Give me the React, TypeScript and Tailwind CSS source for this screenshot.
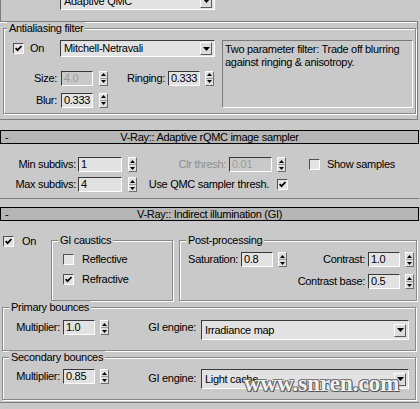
import React from "react";

interface FieldProps {
  value: string;
  w?: string;
  disabled?: boolean;
}

const Field: React.FC<FieldProps> = ({ value, w = "w-[32px]", disabled = false }) => (
  <div
    className={`${w} h-[15px] shrink-0 flex items-center pl-[2px] border border-t-[#3a3a3a] border-l-[#3a3a3a] border-b-white border-r-white ${
      disabled ? "bg-[#c9c9c9] text-[#9c9c9c]" : "bg-[#e2e2e2]"
    }`}
  >
    {value}
  </div>
);

const Spinner: React.FC = () => (
  <div className="w-[9px] h-[15px] shrink-0 flex flex-col bg-[#dedede] border border-t-white border-l-white border-b-[#6e6e6e] border-r-[#6e6e6e]">
    <div className="flex-1 flex items-center justify-center border-b border-[#9a9a9a]">
      <svg width="5" height="3" viewBox="0 0 5 3">
        <path d="M2.5 0L5 3H0z" fill="#000" />
      </svg>
    </div>
    <div className="flex-1 flex items-center justify-center">
      <svg width="5" height="3" viewBox="0 0 5 3">
        <path d="M0 0h5L2.5 3z" fill="#000" />
      </svg>
    </div>
  </div>
);

const Check: React.FC<{ checked?: boolean }> = ({ checked = false }) => (
  <div className="w-[11px] h-[11px] shrink-0 flex items-center justify-center bg-[#e4e4e4] border border-t-[#505050] border-l-[#505050] border-b-white border-r-white">
    {checked && (
      <svg width="7" height="7" viewBox="0 0 7 7">
        <polyline points="0.6,3.2 2.5,5.2 6.5,1" fill="none" stroke="#000" strokeWidth="1.7" />
      </svg>
    )}
  </div>
);

const Dropdown: React.FC<{ value: string; className?: string }> = ({ value, className = "" }) => (
  <div
    className={`shrink-0 flex items-center bg-[#e2e2e2] border border-t-[#3a3a3a] border-l-[#3a3a3a] border-b-white border-r-white pl-[3px] pr-[2px] ${className}`}
  >
    <span className="flex-1 truncate">{value}</span>
    <div className="w-[12px] h-[13px] flex items-center justify-center bg-[#dcdcdc] border border-t-white border-l-white border-b-[#5a5a5a] border-r-[#5a5a5a]">
      <svg width="7" height="4" viewBox="0 0 7 4">
        <path d="M0 0h7L3.5 4z" fill="#000" />
      </svg>
    </div>
  </div>
);

interface GroupProps {
  title: string;
  className?: string;
  titleClass?: string;
  children?: React.ReactNode;
}

const Group: React.FC<GroupProps> = ({ title, className = "", titleClass = "left-[6px]", children }) => (
  <div
    className={`relative shrink-0 border border-[#888888] shadow-[inset_1px_1px_0_#ffffff,1px_1px_0_#ffffff] ${className}`}
  >
    <span className={`absolute -top-[7px] px-[2px] bg-[#c9c9c9] leading-[13px] ${titleClass}`}>{title}</span>
    {children}
  </div>
);

const Header: React.FC<{ title: string; className?: string }> = ({ title, className = "" }) => (
  <div
    className={`relative w-[419px] h-[14px] shrink-0 flex items-center justify-center border border-black bg-[#b6b6b6] ${className}`}
  >
    <span className="absolute left-[4px] top-0 leading-[12px]">-</span>
    <span className="leading-[12px]">{title}</span>
  </div>
);

const App: React.FC = () => {
  return (
    <div className="relative w-[420px] h-[409px] overflow-hidden flex flex-col bg-[#c9c9c9] text-black text-[11px] leading-[13px] tracking-[-0.3px] font-['Liberation_Sans',Arial,sans-serif]">
      {/* tail of the sampler rollout */}
      <div className="h-[22px] w-[418px] shrink-0 border-l border-b border-[#7d7d7d] shadow-[0_1px_0_#ffffff]">
        <div className="flex items-center h-[18px] -mt-[8px]">
          <span className="w-[36px] text-right self-start -mt-[5px]">Type:</span>
          <Dropdown value="Adaptive QMC" className="ml-[23px] w-[155px] h-[18px]" />
        </div>
      </div>

      {/* Antialiasing filter */}
      <div className="h-[98px] w-[418px] shrink-0 pt-[6px] pl-[3px] border-r border-b border-[#7d7d7d]">
        <Group title="Antialiasing filter" className="w-[413px] h-[86px] flex" titleClass="left-[3px]">
          <div className="w-[218px] pt-[11px] flex flex-col">
            <div className="flex items-center h-[17px]">
              <div className="w-[56px] flex items-center">
                <div className="ml-[9px]">
                  <Check checked />
                </div>
                <span className="ml-[6px]">On</span>
              </div>
              <Dropdown value="Mitchell-Netravali" className="w-[155px] h-[17px]" />
            </div>
            <div className="flex items-center h-[16px] mt-[13px]">
              <span className="w-[53px] text-right">Size:</span>
              <div className="ml-[4px]">
                <Field value="4.0" disabled />
              </div>
              <div className="ml-[6px]">
                <Spinner />
              </div>
              <span className="w-[57px] text-right">Ringing:</span>
              <div className="ml-[3px]">
                <Field value="0.333" />
              </div>
              <div className="ml-[5px]">
                <Spinner />
              </div>
            </div>
            <div className="flex items-center h-[16px] mt-[6px]">
              <span className="w-[53px] text-right">Blur:</span>
              <div className="ml-[4px]">
                <Field value="0.333" />
              </div>
              <div className="ml-[6px]">
                <Spinner />
              </div>
            </div>
          </div>
          <div className="mt-[11px] w-[191px] h-[68px] pl-[2px] pt-[2px] border border-t-[#7a7a7a] border-l-[#7a7a7a] border-b-white border-r-white">
            Two parameter filter: Trade off blurring
            <br />
            against ringing &amp; anisotropy.
          </div>
        </Group>
      </div>

      {/* Adaptive rQMC image sampler */}
      <Header title="V-Ray:: Adaptive rQMC image sampler" className="mt-[10px]" />
      <div className="h-[55px] w-[419px] shrink-0 pt-[13px] border-b border-[#7d7d7d]">
        <div className="flex items-center h-[15px]">
          <span className="w-[76px] text-right">Min subdivs:</span>
          <div className="ml-[2px]">
            <Field value="1" w="w-[44px]" />
          </div>
          <div className="ml-[6px]">
            <Spinner />
          </div>
          <span className="w-[89px] text-right text-[#8e8e8e]">Clr thresh:</span>
          <div className="ml-[3px]">
            <Field value="0.01" w="w-[43px]" disabled />
          </div>
          <div className="ml-[5px]">
            <Spinner />
          </div>
          <div className="ml-[23px]">
            <Check />
          </div>
          <span className="ml-[7px]">Show samples</span>
        </div>
        <div className="flex items-center h-[15px] mt-[5px]">
          <span className="w-[76px] text-right">Max subdivs:</span>
          <div className="ml-[2px]">
            <Field value="4" w="w-[44px]" />
          </div>
          <div className="ml-[6px]">
            <Spinner />
          </div>
          <span className="w-[132px] text-right">Use QMC sampler thresh.</span>
          <div className="ml-[8px]">
            <Check checked />
          </div>
        </div>
      </div>

      {/* Indirect illumination */}
      <Header title="V-Ray:: Indirect illumination (GI)" className="mt-[8px]" />
      <div className="h-[182px] w-[419px] shrink-0 pt-[15px] border-b border-[#7d7d7d]">
        <div className="flex items-start">
          <div className="w-[51px] flex items-center h-[11px]">
            <div className="ml-[3px]">
              <Check checked />
            </div>
            <span className="ml-[8px]">On</span>
          </div>
          <Group title="GI caustics" className="mt-[4px] w-[122px] h-[61px] pt-[13px]">
            <div className="flex items-center h-[11px]">
              <div className="ml-[11px]">
                <Check />
              </div>
              <span className="ml-[8px]">Reflective</span>
            </div>
            <div className="flex items-center h-[11px] mt-[9px]">
              <div className="ml-[11px]">
                <Check checked />
              </div>
              <span className="ml-[8px]">Refractive</span>
            </div>
          </Group>
          <Group title="Post-processing" className="mt-[4px] ml-[6px] w-[238px] h-[61px] pt-[11px]">
            <div className="flex items-center h-[15px]">
              <span className="w-[58px] text-right">Saturation:</span>
              <div className="ml-[3px]">
                <Field value="0.8" />
              </div>
              <div className="ml-[5px]">
                <Spinner />
              </div>
              <span className="w-[78px] text-right">Contrast:</span>
              <div className="ml-[3px]">
                <Field value="1.0" />
              </div>
              <div className="ml-[5px]">
                <Spinner />
              </div>
            </div>
            <div className="flex items-center h-[15px] mt-[7px]">
              <div className="w-[107px]" />
              <span className="w-[78px] text-right">Contrast base:</span>
              <div className="ml-[3px]">
                <Field value="0.5" />
              </div>
              <div className="ml-[5px]">
                <Spinner />
              </div>
            </div>
          </Group>
        </div>

        <Group title="Primary bounces" className="mt-[6px] ml-[2px] w-[414px] h-[44px] pt-[12px]">
          <div className="flex items-start">
            <span className="w-[57px] text-right leading-[15px]">Multiplier:</span>
            <div className="ml-[3px]">
              <Field value="1.0" />
            </div>
            <div className="ml-[5px]">
              <Spinner />
            </div>
            <span className="w-[87px] text-right leading-[15px]">GI engine:</span>
            <Dropdown value="Irradiance map" className="ml-[5px] w-[208px] h-[20px]" />
          </div>
        </Group>

        <Group title="Secondary bounces" className="mt-[6px] ml-[2px] w-[414px] h-[43px] pt-[11px]">
          <div className="flex items-start">
            <span className="w-[57px] text-right leading-[15px]">Multiplier:</span>
            <div className="ml-[3px]">
              <Field value="0.85" />
            </div>
            <div className="ml-[5px]">
              <Spinner />
            </div>
            <span className="w-[87px] text-right leading-[15px] mt-[2px]">GI engine:</span>
            <Dropdown value="Light cache" className="ml-[5px] w-[208px] h-[20px]" />
          </div>
        </Group>
      </div>

      {/* watermark */}
      <span className="absolute left-[244px] top-[372px] text-[23px] leading-[24px] tracking-normal font-bold font-['Liberation_Serif',serif] text-[#f2f2f2] [text-shadow:1px_1px_0_#555,-1px_-1px_0_#777,1px_-1px_0_#777,-1px_1px_0_#777]">
        www.snren.com
      </span>
    </div>
  );
};

export default App;
